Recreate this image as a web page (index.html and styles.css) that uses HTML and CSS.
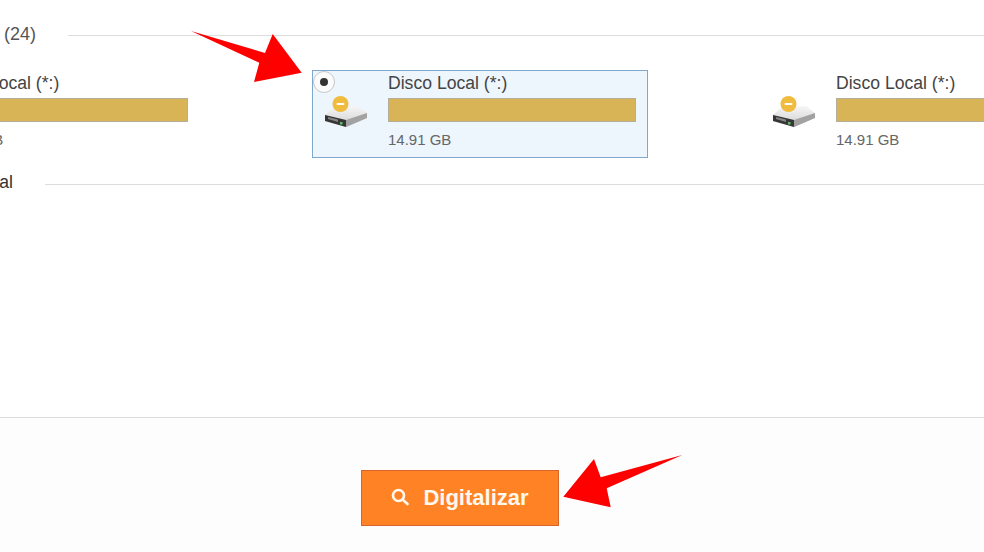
FILE: index.html
```html
<!DOCTYPE html>
<html>
  <head>
    <title>Digitalizar</title>
    <link rel="stylesheet" href="styles.css">
  </head>

  <body>
    <div class="page">
      <div class="drives">
        <div class="section-head">
          <span class="section-title">Disco Local (24)</span>
          <span class="section-line"></span>
        </div>

        <div class="drive-row">
          <div class="drive">
            <svg class="drive-icon" viewBox="0 0 44 34"><use href="#disk"></use></svg>
            <div class="drive-info">
              <div class="drive-name">Disco Local (*:)</div>
              <div class="drive-bar"></div>
              <div class="drive-size">14.91 GB</div>
            </div>
          </div>

          <div class="drive selected">
            <span class="radio"></span>
            <svg class="drive-icon" viewBox="0 0 44 34">
              <defs>
                <linearGradient id="top" x1="0" y1="0" x2="0" y2="1">
                  <stop offset="0" stop-color="#f6f6f6"></stop>
                  <stop offset="1" stop-color="#cfcfcf"></stop>
                </linearGradient>
                <g id="disk">
                  <path d="M1 19 L10 11 L34 10 L43 17 L43 22 L22 31 L1 25 Z" fill="url(#top)"></path>
                  <path d="M1 19 L22 24 L22 31 L1 25 Z" fill="#363636"></path>
                  <path d="M22 24 L43 17 L43 22 L22 31 Z" fill="#a2a2a2"></path>
                  <path d="M4 21 L14 23.5 L14 26 L4 23 Z" fill="#858585"></path>
                  <rect x="16" y="26" width="2.5" height="2.5" fill="#5fbf6a"></rect>
                  <circle cx="16.5" cy="8" r="8" fill="#f0bc3f"></circle>
                  <rect x="12.5" y="7" width="8" height="2" rx="1" fill="#fff"></rect>
                </g>
              </defs>
              <use href="#disk"></use>
            </svg>
            <div class="drive-info">
              <div class="drive-name">Disco Local (*:)</div>
              <div class="drive-bar"></div>
              <div class="drive-size">14.91 GB</div>
            </div>
          </div>

          <div class="drive">
            <svg class="drive-icon" viewBox="0 0 44 34"><use href="#disk"></use></svg>
            <div class="drive-info">
              <div class="drive-name">Disco Local (*:)</div>
              <div class="drive-bar"></div>
              <div class="drive-size">14.91 GB</div>
            </div>
          </div>
        </div>

        <div class="section-head second">
          <span class="section-title">Local</span>
          <span class="section-line"></span>
        </div>
      </div>

      <div class="footer">
        <button class="scan-btn">
          <svg class="scan-icon" viewBox="0 0 18 18">
            <circle cx="7.5" cy="7.5" r="5.5"></circle>
            <path d="M11.5 11.5 L16.5 16"></path>
          </svg>
          Digitalizar
        </button>
      </div>
    </div>

    <!-- red arrows drawn over the screenshot -->
    <svg class="arrows" viewBox="0 0 984 552">
      <polygon points="191,31 265,53 272.7,34 301.7,72.7 254,82 259.3,62.7"></polygon>
      <polygon points="682.3,455 600.7,477.3 594,459 563.3,496.7 610.7,507.3 606.7,488.3"></polygon>
    </svg>
  </body>
</html>
```

FILE: styles.css
```css
body {
  margin: 0;
  height: 552px;
  overflow: hidden;
  position: relative;
  font-family: "Liberation Sans", Arial, sans-serif;
  background: #fff;
}

/* the page is wider than the window, both sides are cut off */
.page {
  width: 1192px;
  margin-left: -136px;
  height: 552px;
  display: flex;
  flex-direction: column;
}
.drives {
  height: 417px;
  padding-top: 22px;
  box-sizing: border-box;
}

/* section headings */
.section-head {
  display: flex;
  align-items: center;
  height: 24px;
  color: #555;
}
.section-title {
  width: 172px;
  flex: none;
  text-align: right;
  font-size: 18px;
  white-space: nowrap;
}
.section-line {
  flex: 1;
  height: 1px;
  margin-left: 32px;
  margin-top: 3px;
  background: #ddd;
}
.section-head.second {
  margin-top: 12px;
  color: #333;
}
.section-head.second .section-title {
  width: 149px;
  font-size: 17.6px;
}
.section-head.second .section-line {
  margin-top: 5px;
}

/* drive cards */
.drive-row {
  display: flex;
  gap: 112px;
  margin-top: 24px;
}
.drive {
  width: 336px;
  height: 88px;
  box-sizing: border-box;
  flex: none;
  display: flex;
  border: 1px solid transparent;
  position: relative;
}
.drive.selected {
  background: #edf5fd;
  border-color: #7ea8d0;
}
.radio {
  position: absolute;
  left: 0;
  top: 0;
  width: 22px;
  height: 22px;
  box-sizing: border-box;
  border: 1px solid #c8c8c8;
  border-radius: 50%;
  background: #fbfbfb;
}
.radio::after {
  content: "";
  position: absolute;
  left: 6px;
  top: 6px;
  width: 8px;
  height: 8px;
  border-radius: 50%;
  background: #333;
}
.drive-icon {
  width: 44px;
  height: 34px;
  flex: none;
  margin: 25px 0 0 11px;
}
.drive-info {
  width: 248px;
  margin-left: 20px;
}
.drive-name {
  font-size: 17.6px;
  line-height: 20px;
  margin-top: 2px;
  color: #444;
  white-space: nowrap;
}
.drive-bar {
  height: 24px;
  box-sizing: border-box;
  margin-top: 5px;
  background: #d8b456;
  border: 1px solid #b3ae9c;
}
.drive-size {
  font-size: 15px;
  line-height: 18px;
  margin-top: 9px;
  color: #666;
}

/* footer with the scan button */
.footer {
  flex: 1;
  display: flex;
  justify-content: center;
  align-items: flex-start;
  padding-top: 52px;
  background: #fdfdfd;
  border-top: 1px solid #ddd;
}
.scan-btn {
  width: 198px;
  height: 56px;
  display: flex;
  align-items: center;
  justify-content: center;
  gap: 14px;
  padding: 0;
  background: #ff8324;
  border: 1px solid #d9652a;
  color: #fff8ee;
  font-family: inherit;
  font-size: 22px;
  font-weight: 700;
}
.scan-icon {
  width: 18px;
  height: 18px;
  margin-bottom: 2px;
  fill: none;
  stroke: #fff8ee;
  stroke-width: 2.6;
  stroke-linecap: round;
}

.arrows {
  position: absolute;
  left: 0;
  top: 0;
  width: 984px;
  height: 552px;
  fill: #fe0000;
  pointer-events: none;
}
```
